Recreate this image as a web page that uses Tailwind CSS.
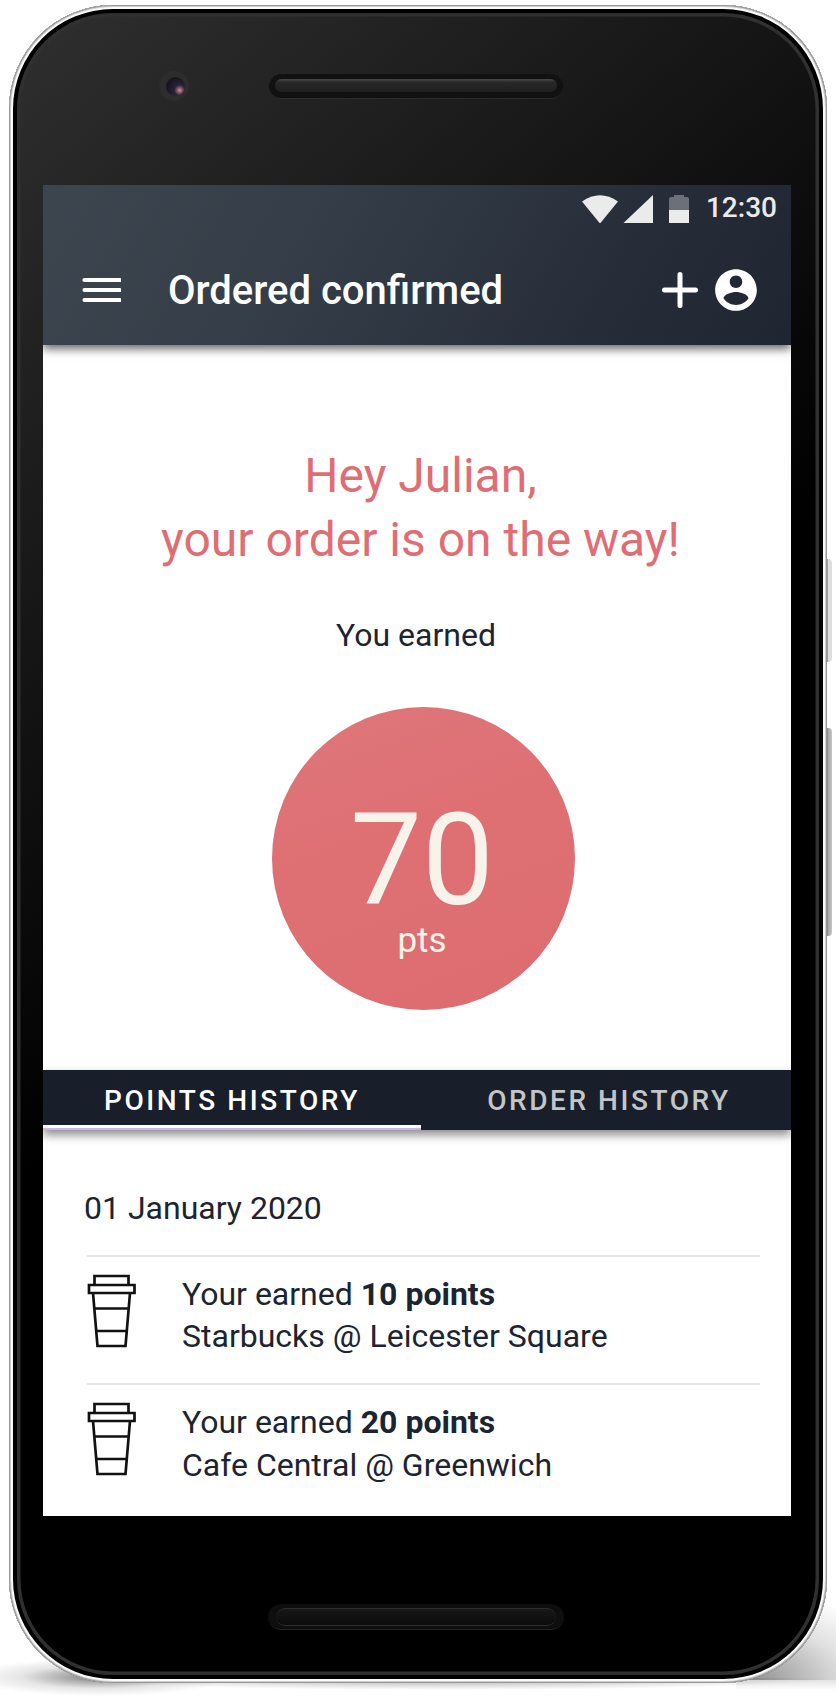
<!DOCTYPE html>
<html lang="en">
<head>
<meta charset="utf-8">
<title>Order confirmed</title>
<script src="https://cdn.jsdelivr.net/npm/@tailwindcss/browser@4"></script>
</head>
<body class="bg-white font-['Roboto',sans-serif] overflow-hidden">
<div class="relative w-[836px] h-[1700px] overflow-hidden pt-[5px] pl-[9px]">

  <!-- ground shadows -->
  <div class="absolute left-[-30px] top-[1658px] w-[260px] h-[38px] bg-[radial-gradient(closest-side,rgba(0,0,0,.5),rgba(0,0,0,.1)_60%,transparent)]"></div>
  <div class="absolute left-[60px] top-[1678px] w-[776px] h-[12px] bg-[radial-gradient(ellipse_50%_100%_at_50%_0%,rgba(0,0,0,.35),transparent)]"></div>
  <div class="absolute left-[736px] top-[1590px] w-[100px] h-[90px] bg-[radial-gradient(ellipse_150px_88px_at_20px_100%,rgba(0,0,0,.42),rgba(0,0,0,.12)_60%,transparent)]"></div>
  <div class="absolute left-[736px] top-[1680px] w-[100px] h-[10px] bg-[linear-gradient(#0000001c,transparent)]"></div>

  <!-- side buttons -->
  <div class="absolute left-[826px] top-[559px] w-[6px] h-[103px] rounded-r-sm bg-[linear-gradient(90deg,#a09da3_30%,#dedede_35%)]"></div>
  <div class="absolute left-[826px] top-[728px] w-[6px] h-[208px] rounded-r-sm bg-[linear-gradient(90deg,#8d8a90_30%,#aaa7aa_40%,#c9c6c9)]"></div>

  <div class="relative w-[818px] h-[1678px] rounded-[104px] bg-[linear-gradient(140deg,#303030,#000_50%)] shadow-[inset_0_0_0_1px_#979797,inset_0_0_0_2px_#cfcfcf,inset_0_0_0_4px_#fafafa,inset_0_0_0_8px_#000,inset_0_0_0_11.5px_#303030]">
    <div class="h-[180px] flex pt-[66px] pl-[150px]">
      <div class="w-[30px] h-[30px] rounded-full bg-[#2d2d2d] flex items-center justify-center">
        <div class="w-[19px] h-[19px] ml-[3px] rounded-full bg-[radial-gradient(circle_at_72%_70%,#e58a8a_0,#8a5a72_12%,#2b2238_28%,#17141f_70%,#24202c)]"></div>
      </div>
      <div class="ml-[80px] mt-[3px] w-[294px] h-[25px] rounded-full bg-[#111] border-b border-[#2c2c2c] pt-[5px] px-[6px]">
        <div class="h-[13px] rounded-full bg-[linear-gradient(#484848,#282828_25%,#1f1f1f)]"></div>
      </div>
    </div>

    <!-- screen -->
    <main class="ml-[34px] w-[748px] h-[1331px] bg-white flex flex-col overflow-hidden text-[#1b2430]">
      <header class="relative z-10 h-[160px] shrink-0 text-white bg-[linear-gradient(120deg,#3d464f,#353e48_35%,#262d38_75%,#1f2631)] shadow-[0_4px_9px_rgba(0,0,0,.6)]">
        <div class="h-[44px] flex items-start justify-end pr-[14px] pt-[10px]">
          <svg class="w-[38px] h-[28px]" viewBox="0 0 38 28"><path fill="#ebebeb" d="M1 6.500Q19-6 37 6.500L19 28.500Z"/></svg>
          <svg class="ml-[3px] w-[31px] h-[28px]" viewBox="0 0 31 28"><path fill="#ebebeb" d="M31 0V28.500H1Z"/></svg>
          <svg class="ml-[16px] w-[20px] h-[28px]" viewBox="0 0 20 28"><path fill="#6b7079" d="M5 0h10v2h3q2 0 2 2v11H0V4q0-2 2-2h3z"/><path fill="#ebebeb" d="M0 15h20v13H0z"/></svg>
          <span class="ml-[17px] text-[28px] leading-[26px] font-medium text-[#ebebeb]">12:30</span>
        </div>
        <div class="flex items-center h-[121px] pl-[38px]">
          <svg class="w-[40px] h-[26px]" viewBox="0 0 40 26"><path stroke="#fff" stroke-width="4.200" stroke-linecap="round" d="M3.500 3h35M3.500 13h35M3.500 23h35"/></svg>
          <h1 class="ml-[47px] mt-[2px] w-[492.500px] text-[40px] leading-[44px] font-medium">Ordered confirmed</h1>
          <svg class="w-[38px] h-[38px]" viewBox="0 0 38 38"><path stroke="#fff" stroke-width="5" stroke-linecap="round" d="M19 3.500v31M3.500 19h31"/></svg>
          <svg class="ml-[12px] w-[50px] h-[50px]" viewBox="0 0 24 24"><path fill="#fff" d="M12 2C6.480 2 2 6.480 2 12s4.480 10 10 10 10-4.480 10-10S17.520 2 12 2zm0 3c1.660 0 3 1.340 3 3s-1.340 3-3 3-3-1.340-3-3 1.340-3 3-3zm0 14.200c-2.500 0-4.710-1.280-6-3.220.03-1.990 4-3.080 6-3.080 1.990 0 5.970 1.090 6 3.080-1.290 1.940-3.500 3.220-6 3.220z"/></svg>
        </div>
      </header>

      <section class="h-[725px] shrink-0 flex flex-col items-center pt-[99px]">
        <h2 class="ml-[7px] text-center text-[48px] leading-[64px] text-[#df6e74]">Hey Julian,<br>your order is on the way!</h2>
        <p class="mt-[43px] -ml-[2px] text-[32px] leading-[40px]">You earned</p>
        <div class="mt-[51.500px] ml-[13px] w-[303px] h-[303px] rounded-full bg-[linear-gradient(160deg,#df777a,#de7074_40%,#dd6c70)] text-[#f7f3ea] flex flex-col items-center pt-[97.500px]">
          <div class="-ml-[3px] text-[128px] leading-[112px]">70</div>
          <div class="mt-[5px] -ml-[3px] text-[35px] leading-[40px]">pts</div>
        </div>
      </section>

      <nav class="relative z-10 h-[60px] shrink-0 grid grid-cols-[378px_370px] grid-rows-[60px] bg-[#181f2a] text-[28px] font-medium text-white tracking-[2.550px] shadow-[0_5px_9px_rgba(0,0,0,.45)]">
        <div class="h-[60px] border-b-2 border-[#cfb6ea]"><div class="h-[58px] border-b-3 border-white flex justify-center leading-[62px]">POINTS HISTORY</div></div>
        <div class="h-[60px] flex justify-center leading-[62px] text-[#c3c6c9] pl-[6px]">ORDER HISTORY</div>
      </nav>

      <section class="pl-[44px] pr-[31px] text-[32px]">
        <div class="h-[125px] pt-[58px] -ml-[3px] leading-[40px]">01 January 2020</div>
        <div class="h-[128px] border-t-2 border-[#e6e6e6] flex">
          <svg class="mt-[17px] w-[50px] h-[74px] shrink-0" viewBox="-.5 0 50 74" fill="none" stroke="#111" stroke-width="2.700"><path d="M7 10V2h34v8M1.500 11h45.500v8H1.500zM5.500 19l4.500 53h28l4.500-53M7 34.500h34M8.500 57h31"/></svg>
          <p class="ml-[45px] pt-[15.500px] leading-[42.500px]">Your earned <b>10 points</b><br>Starbucks @ Leicester Square</p>
        </div>
        <div class="h-[128px] border-t-2 border-[#e6e6e6] flex">
          <svg class="mt-[17px] w-[50px] h-[74px] shrink-0" viewBox="-.5 0 50 74" fill="none" stroke="#111" stroke-width="2.700"><path d="M7 10V2h34v8M1.500 11h45.500v8H1.500zM5.500 19l4.500 53h28l4.500-53M7 34.500h34M8.500 57h31"/></svg>
          <p class="ml-[45px] pt-[16px] leading-[42.500px]">Your earned <b>20 points</b><br>Cafe Central @ Greenwich</p>
        </div>
      </section>
    </main>

    <div class="ml-[259px] mt-[88px] w-[296px] h-[26px] rounded-full bg-[#0e0e0e] border-b border-[#222] pt-[4px] px-[8px]">
      <div class="h-[18px] rounded-full bg-[linear-gradient(#171717,#0c0c0c)] border-y border-[#2d2d2d]"></div>
    </div>
  </div>
</div>
</body>
</html>
